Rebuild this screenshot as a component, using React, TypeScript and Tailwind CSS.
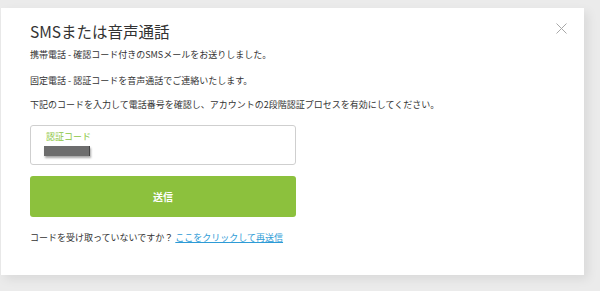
const JP = { fontFamily: '"Noto Sans CJK JP", "Noto Sans", sans-serif' };

export default function App() {
  return (
    <div className="w-[600px] h-[291px] bg-[#ebebeb] pt-2 overflow-hidden" style={JP}>
      <div className="relative ml-[1px] w-[583px] h-[267px] bg-white shadow-[4px_4px_10px_rgba(0,0,0,0.08)] px-[29px] pt-[12px]">
        <button className="absolute right-[17px] top-[15px] text-[#a8a8a8]" aria-label="close">
          <svg width="11" height="11" viewBox="0 0 11 11" fill="none" stroke="currentColor" strokeWidth="1">
            <path d="M0.5 0.5 L10.5 10.5 M10.5 0.5 L0.5 10.5" />
          </svg>
        </button>

        <h1 className="text-[15.5px] leading-[22px] text-[#333] font-normal">SMSまたは音声通話</h1>

        <div className="mt-[6px] text-[9px] leading-[13px] text-[#333]">
          <p>携帯電話 - 確認コード付きのSMSメールをお送りしました。</p>
          <p className="mt-[13px]">固定電話 - 認証コードを音声通話でご連絡いたします。</p>
          <p className="mt-[11px]">下記のコードを入力して電話番号を確認し、アカウントの2段階認証プロセスを有効にしてください。</p>
        </div>

        <div className="mt-[14px] w-[266px] h-[40px] rounded-[3px] border border-[#cfcfcf] pl-[15px] pt-[5px]">
          <div className="text-[9px] leading-[12px] text-[#8cc63f]">認証コード</div>
          <div className="mt-[3px] -ml-[2px] w-[46px] h-[10px] bg-[#6d6d6d] border-r border-[#444] shadow-[1px_2px_2px_rgba(0,0,0,0.35)]" />
        </div>

        <button className="mt-[11px] w-[266px] h-[41px] rounded-[3px] bg-[#8cc13d] text-white text-[10px] font-bold flex items-center justify-center">
          送信
        </button>

        <p className="mt-[14px] text-[9px] leading-[13px] text-[#333]">
          コードを受け取っていないですか？{" "}
          <a href="#" className="text-[#2d9bd6] underline">ここをクリックして再送信</a>
        </p>
      </div>
    </div>
  );
}
